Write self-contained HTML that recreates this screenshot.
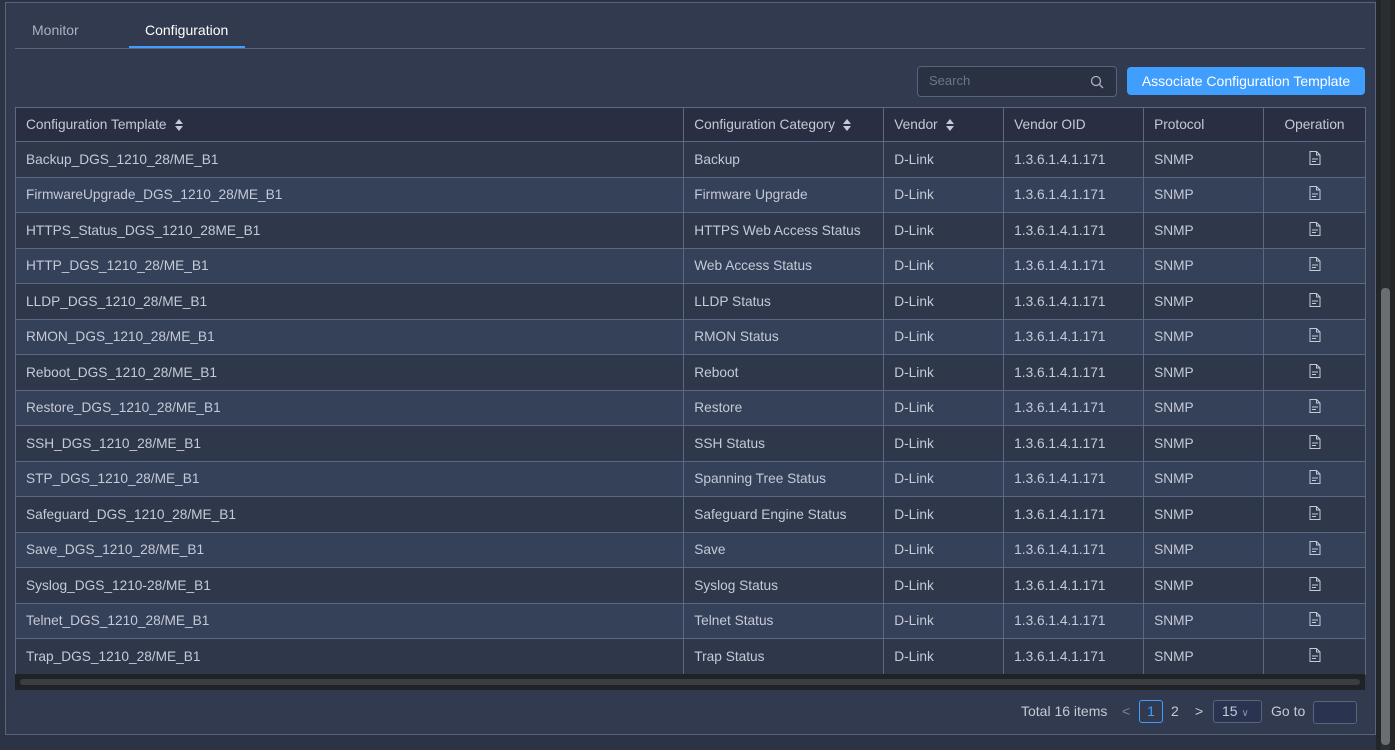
<!DOCTYPE html>
<html><head><meta charset="utf-8"><style>
*{box-sizing:border-box;margin:0;padding:0}
body{width:1395px;height:750px;background:#2c3345;font-family:"Liberation Sans",sans-serif;color:#c4cad6;font-size:14px;position:relative;overflow:hidden}
.panel{position:absolute;left:5px;top:2px;width:1371px;height:733px;border:1px solid #59637c;background:#313a4e}
.vscroll{position:absolute;left:1376px;top:0;width:19px;height:750px;background:#222628}
.vscroll .tr{position:absolute;left:5px;top:0;width:9px;height:750px;background:#2a2e30}
.vscroll .th{position:absolute;left:5px;top:288px;width:9px;height:457px;background:#6b6e70;border-radius:4px}
.tabs{position:absolute;left:15px;top:0;width:1350px;height:49px;border-bottom:1px solid #59637c}
.tab{position:absolute;top:22px;font-size:14px}
.ul{position:absolute;left:129px;top:46px;width:116px;height:2px;background:#409eff}
.search{position:absolute;left:917px;top:66px;width:200px;height:31px;border:1px solid #59637c;border-radius:4px;background:#2a3143;color:#6c758a;font-size:13px;padding:6px 11px}
.btn{position:absolute;left:1127px;top:67px;width:238px;height:28px;background:#409eff;border-radius:4px;color:#fff;font-size:14px;text-align:center;line-height:28px}
table{position:absolute;left:15px;top:107px;width:1351px;border-collapse:collapse}
td,th{border:1px solid #5d6883;height:35.5px;padding:0 10px;text-align:left;font-weight:normal;font-size:13.7px;color:#c4cad6;white-space:nowrap}
th{height:34px;background:#292e42}
tr:nth-child(even) td{background:#2f374b}
tr:nth-child(odd) td{background:#354059}
.c{text-align:center}
.sort{display:inline-block;vertical-align:middle;margin-left:8px;width:8px;height:12px;position:relative}
.sort:before{content:"";position:absolute;left:0;top:0;border:4px solid transparent;border-bottom:5px solid #c4cad6;border-top:0}
.sort:after{content:"";position:absolute;left:0;top:7px;border:4px solid transparent;border-top:5px solid #c4cad6;border-bottom:0}
.hs{position:absolute;left:15px;top:674px;width:1350px;height:16px;background:#1f2325}
.hs div{position:absolute;left:5px;top:5px;width:1340px;height:6px;background:#3a3e40;border-radius:3px}
.pg{position:absolute;top:703px;font-size:14px;color:#c4cad6}
</style></head><body>
<div class="panel"></div>
<div class="vscroll"><div class="tr"></div><div class="th"></div></div>
<div class="tabs"></div>
<div class="tab" style="left:32px;color:#aab2c2">Monitor</div>
<div class="tab" style="left:145px;color:#fff">Configuration</div>
<div class="ul"></div>
<div class="search">Search<svg style="position:absolute;right:12px;top:8px" width="14" height="14" viewBox="0 0 14 14"><circle cx="6" cy="6" r="4.5" fill="none" stroke="#aab2c2" stroke-width="1.3"/><path d="M9.5 9.5L13 13" stroke="#aab2c2" stroke-width="1.3"/></svg></div>
<div class="btn">Associate Configuration Template</div>
<table>
<colgroup><col style="width:669px"><col style="width:200px"><col style="width:120px"><col style="width:140px"><col style="width:120px"><col style="width:102px"></colgroup>
<tr><th>Configuration Template<span class="sort"></span></th><th>Configuration Category<span class="sort"></span></th><th>Vendor<span class="sort"></span></th><th>Vendor OID</th><th>Protocol</th><th class="c">Operation</th></tr>
</table>
<script>
const rows=[["Backup_DGS_1210_28/ME_B1","Backup"],["FirmwareUpgrade_DGS_1210_28/ME_B1","Firmware Upgrade"],["HTTPS_Status_DGS_1210_28ME_B1","HTTPS Web Access Status"],["HTTP_DGS_1210_28/ME_B1","Web Access Status"],["LLDP_DGS_1210_28/ME_B1","LLDP Status"],["RMON_DGS_1210_28/ME_B1","RMON Status"],["Reboot_DGS_1210_28/ME_B1","Reboot"],["Restore_DGS_1210_28/ME_B1","Restore"],["SSH_DGS_1210_28/ME_B1","SSH Status"],["STP_DGS_1210_28/ME_B1","Spanning Tree Status"],["Safeguard_DGS_1210_28/ME_B1","Safeguard Engine Status"],["Save_DGS_1210_28/ME_B1","Save"],["Syslog_DGS_1210-28/ME_B1","Syslog Status"],["Telnet_DGS_1210_28/ME_B1","Telnet Status"],["Trap_DGS_1210_28/ME_B1","Trap Status"]];
const ic='<svg width="12" height="14" viewBox="0 0 12 14"><path d="M1 .5H7.5L11 4V13.5H1Z M7.5 .5V4H11" fill="none" stroke="#c4cad6" stroke-width="1"/><path d="M3 8H9M3 10.5H7" stroke="#c4cad6"/></svg>';
let h='';for(const r of rows)h+=`<tr><td>${r[0]}</td><td>${r[1]}</td><td>D-Link</td><td>1.3.6.1.4.1.171</td><td>SNMP</td><td class="c">${ic}</td></tr>`;
document.querySelector('table tbody').insertAdjacentHTML('beforeend',h);
</script>
<div class="hs"><div></div></div>
<div class="pg" style="left:1021px">Total 16 items</div>
<div class="pg" style="left:1122px;color:#7d8699">&lt;</div>
<div class="pg" style="left:1139px;top:700px;width:24px;height:23px;border:1px solid #409eff;border-radius:3px;color:#409eff;text-align:center;line-height:21px">1</div>
<div class="pg" style="left:1171px">2</div>
<div class="pg" style="left:1195px">&gt;</div>
<div class="pg" style="left:1213px;top:700px;width:49px;height:23px;border:1px solid #59637c;border-radius:3px;background:#2a3350;padding-left:8px;line-height:21px">15 <span style="font-size:10px;color:#8d96a8">&#8744;</span></div>
<div class="pg" style="left:1271px">Go to</div>
<div class="pg" style="left:1313px;top:701px;width:44px;height:23px;border:1px solid #59637c;border-radius:3px;background:#2a3350"></div>
</body></html>
